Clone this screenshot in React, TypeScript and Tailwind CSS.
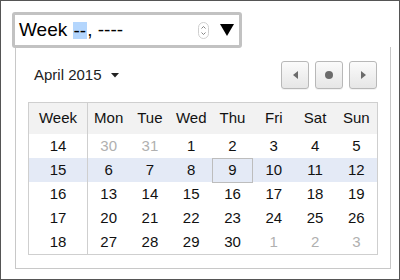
import React from "react";

const rows: { week: number; days: { d: number; other?: boolean }[]; hl?: boolean }[] = [
  { week: 14, days: [{ d: 30, other: true }, { d: 31, other: true }, { d: 1 }, { d: 2 }, { d: 3 }, { d: 4 }, { d: 5 }] },
  { week: 15, hl: true, days: [{ d: 6 }, { d: 7 }, { d: 8 }, { d: 9 }, { d: 10 }, { d: 11 }, { d: 12 }] },
  { week: 16, days: [{ d: 13 }, { d: 14 }, { d: 15 }, { d: 16 }, { d: 17 }, { d: 18 }, { d: 19 }] },
  { week: 17, days: [{ d: 20 }, { d: 21 }, { d: 22 }, { d: 23 }, { d: 24 }, { d: 25 }, { d: 26 }] },
  { week: 18, days: [{ d: 27 }, { d: 28 }, { d: 29 }, { d: 30 }, { d: 1, other: true }, { d: 2, other: true }, { d: 3, other: true }] },
];

const dayNames = ["Mon", "Tue", "Wed", "Thu", "Fri", "Sat", "Sun"];

function NavButton({ children }: { children: React.ReactNode }) {
  return (
    <div className="w-[28px] h-[28px] rounded-[3px] border border-[#b8b8b8] bg-gradient-to-b from-[#fbfbfb] to-[#e6e6e6] flex items-center justify-center shadow-[0_1px_0_rgba(0,0,0,0.05)]">
      {children}
    </div>
  );
}

export default function App() {
  return (
    <div
      className="w-[400px] h-[280px] border border-[#555] bg-white relative overflow-hidden"
      style={{ fontFamily: '"Liberation Sans", Arial, sans-serif' }}
    >
      {/* input */}
      <div className="relative z-10 ml-[11px] mt-[11px] w-[230px] h-[36px] rounded-[3px] border-[3px] border-[#c2c2c2] bg-white flex items-center pl-[4px] pr-[5px]">
        <div className="text-[19px] leading-[22px] text-black whitespace-pre flex items-center">
          <span>Week </span>
          <span className="bg-[#b4d6fd] leading-[17px] px-[1px]">--</span>
          <span>, ----</span>
        </div>
        <div className="ml-auto flex items-center gap-[11px]">
          <svg width="11" height="17" viewBox="0 0 11 17">
            <rect x="0.5" y="0.5" width="10" height="16" rx="5" fill="#fff" stroke="#cfcfcf" />
            <path d="M3.5 6.5 L5.5 4.5 L7.5 6.5" fill="none" stroke="#777" strokeWidth="0.9" />
            <path d="M3.5 10.5 L5.5 12.5 L7.5 10.5" fill="none" stroke="#777" strokeWidth="0.9" />
          </svg>
          <svg width="14" height="12" viewBox="0 0 14 12">
            <polygon points="0,0 14,0 7,12" fill="#000" />
          </svg>
        </div>
      </div>

      {/* popup */}
      <div className="ml-[14px] mt-[-1px] w-[376px] h-[222px] border border-[#c8c8c8] border-t-0 bg-white">
        <div className="h-[55px] flex items-start pt-[14px] pl-[18px] pr-[13px]">
          <div className="h-[28px] flex items-center text-[15px] text-[#222]">
            <span>April 2015</span>
            <svg className="ml-[9px]" width="8" height="5" viewBox="0 0 8 5">
              <polygon points="0,0 8,0 4,4.5" fill="#222" />
            </svg>
          </div>
          <div className="ml-auto flex gap-[6px]">
            <NavButton>
              <svg width="5" height="8" viewBox="0 0 5 8">
                <polygon points="5,0 5,8 0,4" fill="#6b6b6b" />
              </svg>
            </NavButton>
            <NavButton>
              <div className="w-[8px] h-[8px] rounded-full bg-[#6b6b6b]" />
            </NavButton>
            <NavButton>
              <svg width="5" height="8" viewBox="0 0 5 8">
                <polygon points="0,0 0,8 5,4" fill="#6b6b6b" />
              </svg>
            </NavButton>
          </div>
        </div>

        <div className="ml-[12px] w-[350px] border border-[#cfcfcf] text-[15px] text-[#111]">
          <div className="flex h-[31px] bg-[#f2f2f2]">
            <div className="w-[59px] border-r border-[#cfcfcf] flex items-center justify-center">Week</div>
            <div className="flex-1 grid grid-cols-7">
              {dayNames.map((n) => (
                <div key={n} className="flex items-center justify-center">{n}</div>
              ))}
            </div>
          </div>
          {rows.map((r) => (
            <div key={r.week} className={`flex h-[24px] ${r.hl ? "bg-[#e4eaf6]" : ""}`}>
              <div className="w-[59px] border-r border-[#cfcfcf] flex items-center justify-center">{r.week}</div>
              <div className="flex-1 grid grid-cols-7">
                {r.days.map((c, i) => (
                  <div
                    key={i}
                    className={`flex items-center justify-center ${c.other ? "text-[#b0b0b0]" : ""} ${
                      r.hl && c.d === 9 ? "border border-[#bdbdbd]" : ""
                    }`}
                  >
                    {c.d}
                  </div>
                ))}
              </div>
            </div>
          ))}
        </div>
      </div>
    </div>
  );
}
